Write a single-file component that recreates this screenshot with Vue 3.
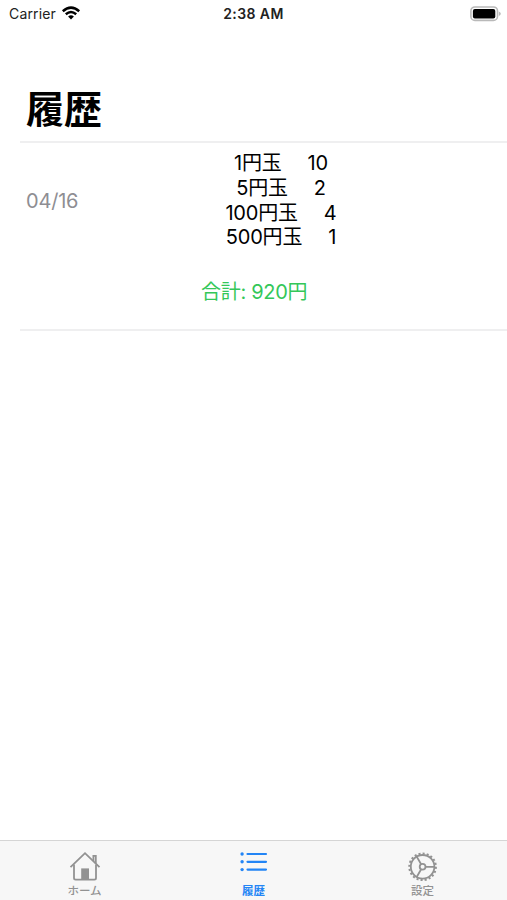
<template>
  <div class="screen">
    <header class="status-bar">
      <div class="carrier">
        <span>Carrier</span>
        <svg class="wifi" viewBox="0 0 20 14">
          <path d="M1.8 5.2 Q10 -2 18.2 5.2" />
          <path d="M4.8 8.2 Q10 3.8 15.2 8.2" />
          <path class="wifi-dot" d="M7.1 10.4 Q10 8 12.9 10.4 L10 13.4 Z" />
        </svg>
      </div>
      <div class="time">2:38 AM</div>
      <div class="battery">
        <svg viewBox="0 0 31 16">
          <rect x="0.9" y="1" width="26.6" height="13.4" rx="4" fill="#fff" stroke="#b9b9b9" stroke-width="1.6" />
          <rect x="2.9" y="3" width="22.4" height="9.4" rx="2" fill="#000" />
          <path d="M28.8 5.5 Q30.8 6.3 30.8 7.7 Q30.8 9.1 28.8 9.9 Z" fill="#b9b9b9" />
        </svg>
      </div>
    </header>

    <h1 class="title">履歴</h1>

    <main class="list">
      <div v-for="item in history" :key="item.date" class="row">
        <div class="date">{{ item.date }}</div>
        <div class="coins">
          <div v-for="coin in item.coins" :key="coin.name" class="coin">
            <span>{{ coin.name }}</span>
            <span>{{ coin.count }}</span>
          </div>
        </div>
        <div class="total">合計: {{ item.total }}円</div>
      </div>
    </main>

    <nav class="tab-bar">
      <button
        v-for="tab in tabs"
        :key="tab.id"
        class="tab"
        :class="{ active: current === tab.id }"
        @click="current = tab.id"
      >
        <svg v-if="tab.id === 'home'" class="icon" viewBox="0 0 32 32">
          <path d="M1.5 17.2 L16 3.2 L30.5 17.2" />
          <path d="M5 14.5 V28 Q5 29.6 6.6 29.6 H25.4 Q27 29.6 27 28 V14.5" />
          <path d="M24.4 11 V5.8 H26.8 V13.4" />
          <rect x="12.2" y="18.4" width="7.8" height="11.2" fill="currentColor" stroke="none" />
        </svg>
        <svg v-else-if="tab.id === 'history'" class="icon list-icon" viewBox="0 0 32 32">
          <g fill="currentColor" stroke="none">
            <circle cx="4.1" cy="4" r="1.7" />
            <circle cx="4.1" cy="11.8" r="1.7" />
            <circle cx="4.1" cy="19.6" r="1.7" />
          </g>
          <path d="M9.5 4 H28 M9.5 11.8 H28 M9.5 19.6 H28" />
        </svg>
        <svg v-else class="icon" viewBox="0 0 32 32">
          <circle cx="15.6" cy="16.8" r="11.8" />
          <circle class="teeth" cx="15.6" cy="16.8" r="13.3" pathLength="40" />
          <circle cx="15.6" cy="16.8" r="2.9" />
          <path d="M18.5 16.8 H27.4 M14.15 14.3 L9.7 6.6 M14.15 19.3 L9.7 27" />
        </svg>
        <span class="label">{{ tab.label }}</span>
      </button>
    </nav>
  </div>
</template>

<script setup>
import { ref } from 'vue'

const current = ref('history')

const history = [
  {
    date: '04/16',
    coins: [
      { name: '1円玉', count: 10 },
      { name: '5円玉', count: 2 },
      { name: '100円玉', count: 4 },
      { name: '500円玉', count: 1 }
    ],
    total: 920
  }
]

const tabs = [
  { id: 'home', label: 'ホーム' },
  { id: 'history', label: '履歴' },
  { id: 'settings', label: '設定' }
]
</script>

<style>
body {
  margin: 0;
  background: #ffffff;
}
</style>

<style scoped>
.screen {
  display: flex;
  flex-direction: column;
  height: 100vh;
  overflow: hidden;
  background: #ffffff;
  color: #000000;
  font-family: Inter, "Noto Sans CJK JP", sans-serif;
}

.status-bar {
  display: grid;
  grid-template-columns: 1fr auto 1fr;
  align-items: center;
  height: 27px;
  padding: 0 6px 0 9px;
  font-size: 14px;
  line-height: 27px;
  color: #222222;
}

.carrier {
  display: flex;
  align-items: center;
  gap: 5px;
  letter-spacing: 0.15px;
}

.wifi {
  width: 20px;
  height: 14px;
  margin-top: -2px;
  fill: none;
  stroke: #000000;
  stroke-width: 2.5;
}

.wifi .wifi-dot {
  fill: #000000;
  stroke: none;
}

.time {
  margin-right: 3px;
  font-weight: 600;
  letter-spacing: 0.4px;
}

.battery {
  display: flex;
  justify-content: flex-end;
}

.battery svg {
  width: 31px;
  height: 16px;
}

.title {
  box-sizing: border-box;
  height: 114px;
  margin: 0;
  padding: 54px 0 0 26px;
  font-size: 38px;
  font-weight: 700;
  line-height: 57px;
}

.list {
  flex: 1;
  margin-left: 20px;
}

.row {
  display: grid;
  grid-template-columns: 52px 1fr;
  grid-template-rows: 99px 1fr;
  box-sizing: border-box;
  height: 190px;
  padding: 8px 0 0 6px;
  border-top: 2px solid #efeff0;
  border-bottom: 2px solid #efeff0;
  font-size: 20px;
}

.date {
  align-self: center;
  color: #8e8e93;
  letter-spacing: -0.2px;
  white-space: nowrap;
}

.coins {
  width: 130px;
  margin-left: 138px;
}

.coin {
  display: flex;
  justify-content: center;
  gap: 26px;
  line-height: 24.8px;
  letter-spacing: -0.2px;
  white-space: nowrap;
}

.total {
  grid-column: 1 / -1;
  margin: 27px 0 0 175px;
  line-height: 30px;
  letter-spacing: -0.3px;
  color: #34c759;
}

.tab-bar {
  display: grid;
  grid-template-columns: repeat(3, 1fr);
  box-sizing: border-box;
  height: 60px;
  border-top: 1px solid #d5d5d5;
  background: #f7f7f7;
}

.tab {
  display: flex;
  flex-direction: column;
  align-items: center;
  padding: 9px 0 0;
  border: none;
  background: none;
  color: #929292;
  font-family: inherit;
  cursor: pointer;
}

.tab.active {
  color: #2385f5;
}

.icon {
  width: 32px;
  height: 32px;
  fill: none;
  stroke: currentColor;
  stroke-width: 1.8;
}

.list-icon {
  stroke-width: 2.2;
  stroke-linecap: round;
}

.teeth {
  stroke-width: 2;
  stroke-dasharray: 1 1;
}

.label {
  margin-top: 1px;
  font-size: 11.5px;
  font-weight: 500;
  line-height: 17px;
}

.active .label {
  font-weight: 700;
}
</style>
